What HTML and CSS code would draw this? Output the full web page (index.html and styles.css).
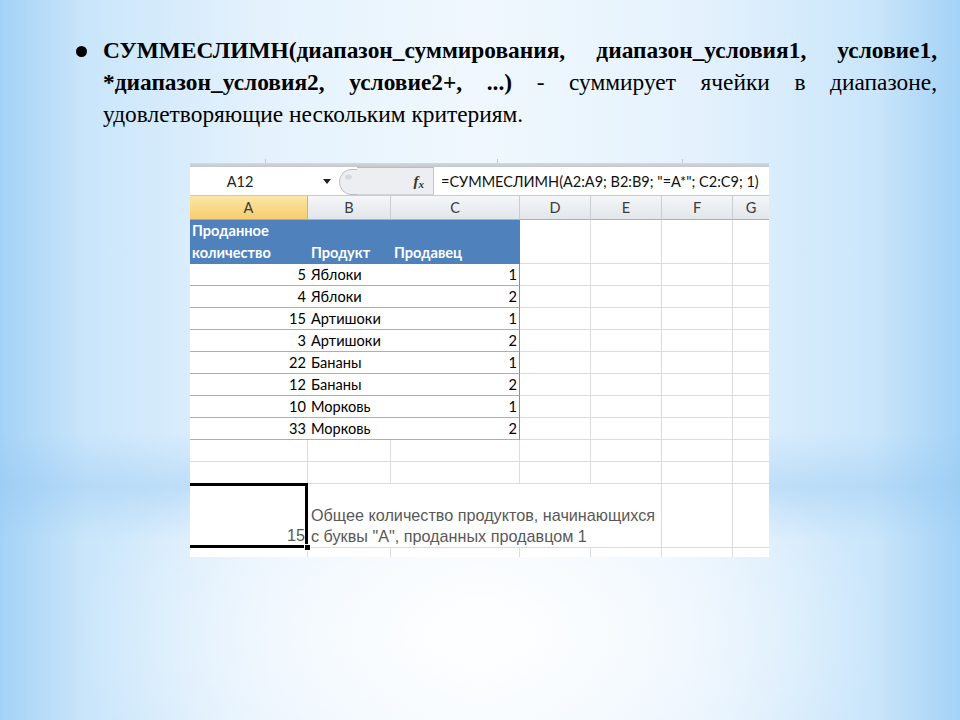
FILE: index.html
```html
<!DOCTYPE html>
<html lang="ru">
<head>
<meta charset="utf-8">
<title>СУММЕСЛИМН</title>
<link rel="stylesheet" href="styles.css">
</head>
<body>
<div class="slide">
  <div class="item">
    <span class="bullet"></span>
    <p class="text"><b>СУММЕСЛИМН(диапазон_суммирования, диапазон_условия1, условие1, *диапазон_условия2, условие2+, ...)</b> - суммирует ячейки в диапазоне, удовлетворяющие нескольким критериям.</p>
  </div>

  <div class="sheet">
    <div class="ribbon-edge">
      <span class="tick t1"></span>
      <span class="tick t2"></span>
      <span class="tick t3"></span>
    </div>
    <div class="trim"></div>
    <div class="fbar">
      <div class="namebox">A12</div>
      <svg class="dd" width="8" height="5" viewBox="0 0 8 5"><path d="M0 0H8L4 5Z" fill="#222"/></svg>
      <svg class="grip" width="18" height="26" viewBox="0 0 18 26">
        <path d="M18 0.5H12A11.5 12.5 0 0 0 12 25.5H18" fill="#eceef1" stroke="#b9bec5"/>
        <ellipse cx="9.5" cy="8" rx="3.5" ry="2.5" fill="#d6d9dd"/>
      </svg>
      <div class="fxarea"><span class="fx">f<span class="fxx">x</span></span></div>
      <div class="formula">=СУММЕСЛИМН(A2:A9; B2:B9; "=A*"; C2:C9; 1)</div>
    </div>

    <div class="grid">
      <div class="ch sel">A</div>
      <div class="ch">B</div>
      <div class="ch">C</div>
      <div class="ch">D</div>
      <div class="ch">E</div>
      <div class="ch">F</div>
      <div class="ch last">G</div>

      <div class="hd hd-a"><span>Проданное</span><span>количество</span></div>
      <div class="hd">Продукт</div>
      <div class="hd hd-c">Продавец</div>
      <div class="c"></div><div class="c"></div><div class="c"></div><div class="c last"></div>

      <div class="d num">5</div><div class="d">Яблоки</div><div class="d num dc">1</div><div class="c"></div><div class="c"></div><div class="c"></div><div class="c last"></div>
      <div class="d num">4</div><div class="d">Яблоки</div><div class="d num dc">2</div><div class="c"></div><div class="c"></div><div class="c"></div><div class="c last"></div>
      <div class="d num">15</div><div class="d">Артишоки</div><div class="d num dc">1</div><div class="c"></div><div class="c"></div><div class="c"></div><div class="c last"></div>
      <div class="d num">3</div><div class="d">Артишоки</div><div class="d num dc">2</div><div class="c"></div><div class="c"></div><div class="c"></div><div class="c last"></div>
      <div class="d num">22</div><div class="d">Бананы</div><div class="d num dc">1</div><div class="c"></div><div class="c"></div><div class="c"></div><div class="c last"></div>
      <div class="d num">12</div><div class="d">Бананы</div><div class="d num dc">2</div><div class="c"></div><div class="c"></div><div class="c"></div><div class="c last"></div>
      <div class="d num">10</div><div class="d">Морковь</div><div class="d num dc">1</div><div class="c"></div><div class="c"></div><div class="c"></div><div class="c last"></div>
      <div class="d num">33</div><div class="d">Морковь</div><div class="d num dc">2</div><div class="c"></div><div class="c"></div><div class="c"></div><div class="c last"></div>

      <div class="c"></div><div class="c"></div><div class="c"></div><div class="c"></div><div class="c"></div><div class="c"></div><div class="c last"></div>
      <div class="c"></div><div class="c"></div><div class="c"></div><div class="c"></div><div class="c"></div><div class="c"></div><div class="c last"></div>

      <div class="c active">15</div>
      <div class="c note">Общее количество продуктов, начинающихся<br>с буквы "А", проданных продавцом 1</div>
      <div class="c"></div><div class="c last"></div>

      <div class="c edge"></div><div class="c edge"></div><div class="c edge"></div><div class="c edge"></div><div class="c edge"></div><div class="c edge"></div><div class="c edge last"></div>
    </div>
  </div>
</div>
</body>
</html>
```

FILE: styles.css
```css
html, body {
  margin: 0;
  padding: 0;
}

body {
  width: 960px;
  height: 720px;
  overflow: hidden;
}

.slide {
  width: 960px;
  height: 720px;
  box-sizing: border-box;
  padding-top: 34px;
  background:
    radial-gradient(ellipse 42% 30% at 50% 88%, rgba(255,255,255,0.95), rgba(255,255,255,0) 100%),
    linear-gradient(to bottom, rgba(150,200,242,0) 60%, rgba(150,200,242,0.4) 67.5%, rgba(150,200,242,0) 75%),
    linear-gradient(to right, #a4d2f6 0%, #cae6fb 9%, #e5f2fd 28%, #f0f8fe 50%, #e5f2fd 72%, #cae6fb 91%, #a4d2f6 100%);
}

/* ---------- bullet text ---------- */
.item {
  display: flex;
  align-items: flex-start;
  padding-left: 76px;
  padding-right: 23px;
}

.bullet {
  flex: none;
  width: 11px;
  height: 11px;
  margin-top: 12px;
  margin-right: 16px;
  border-radius: 50%;
  background: #000;
}

.text {
  margin: 0;
  flex: 1;
  font-family: "Liberation Serif", "Times New Roman", serif;
  font-size: 23.4px;
  line-height: 32px;
  text-align: justify;
  color: #000;
}

.text b {
  font-weight: bold;
}

/* ---------- spreadsheet picture ---------- */
.sheet {
  width: 579px;
  margin-left: 190px;
  margin-top: 25px;
  font-family: Lato, "Open Sans", sans-serif;
}

.ribbon-edge {
  height: 8px;
  display: flex;
  align-items: flex-end;
}

.tick {
  width: 1px;
  height: 4px;
  background: #c4c9cf;
}
.t1 { margin-left: 75px; }
.t2 { margin-left: 231px; }
.t3 { margin-left: 184px; }

.trim {
  height: 4px;
  background: linear-gradient(#d4d8dd, #c3c8ce);
}

.fbar {
  height: 28px;
  display: flex;
  align-items: center;
  background: #fff;
  border-bottom: 1px solid #c6cbd1;
}

.namebox {
  width: 100px;
  text-align: center;
  font-size: 14.5px;
  color: #222;
}

.dd {
  margin-left: 33px;
  margin-top: 1px;
}

.grip {
  margin-left: 8px;
  align-self: flex-end;
  flex: none;
}

.fxarea {
  align-self: stretch;
  width: 77px;
  background: #eceef1;
  border-top: 1px solid #b9bec5;
  border-bottom: 1px solid #d3d7dc;
  border-right: 1px solid #c2c7cd;
  box-sizing: border-box;
  display: flex;
  align-items: center;
  justify-content: flex-end;
  padding-right: 9px;
}

.fx {
  font-family: "Liberation Serif", serif;
  font-style: italic;
  font-weight: bold;
  font-size: 15px;
  color: #333;
}
.fxx {
  font-size: 11px;
  position: relative;
  top: 2px;
}

.formula {
  flex: 1;
  padding-left: 7px;
  font-size: 14.5px;
  color: #111;
  white-space: nowrap;
  overflow: hidden;
}

/* ---------- grid ---------- */
.grid {
  display: grid;
  grid-template-columns: 118px 83px 129px 71px 71px 71px 36px;
  grid-template-rows: 24px 44px repeat(8, 22px) 22px 22px 64px 9px;
  background: #fff;
  font-size: 14.6px;
  color: #000;
}

.grid > div {
  box-sizing: border-box;
  border-right: 1px solid #dadcdf;
  border-bottom: 1px solid #dadcdf;
  white-space: nowrap;
  overflow: hidden;
}

.grid > .last {
  border-right: none;
}

.ch {
  display: flex;
  align-items: center;
  justify-content: center;
  font-size: 14.5px;
  color: #3b3b3b;
  background: linear-gradient(#f4f6f8, #e2e6ea);
  border-right-color: #c9ced4 !important;
  border-bottom-color: #a9b0b8 !important;
}

.ch.sel {
  background: linear-gradient(#fbe6a6, #f7cd6e);
  border-bottom-color: #e0a23a !important;
  border-right-color: #d7b46a !important;
}

.grid > .hd {
  background: #4f81bd;
  color: #fff;
  font-weight: bold;
  border-right: none;
  border-bottom: none;
  display: flex;
  align-items: flex-end;
  padding: 0 0 0 3px;
  line-height: 22px;
}

.grid > .hd-a {
  flex-direction: column;
  align-items: flex-start;
  justify-content: flex-end;
  padding-left: 2px;
}

.grid > .hd-c {
  border-right: 1px solid #4f81bd;
}

.grid > .d {
  border-right: none;
  border-bottom: 1px solid #95b3d7;
  line-height: 21px;
  padding: 0 3px;
}

.grid > .num {
  text-align: right;
  padding-right: 2px;
}

.grid > .dc {
  border-right: 1px solid #6f94c7;
}

.grid > .note {
  grid-column: 2 / 6;
  border-right: 1px solid #dadcdf;
  display: flex;
  align-items: flex-end;
  padding: 0 0 0 3px;
  font-family: "Liberation Sans", Arial, sans-serif;
  font-size: 16.2px;
  line-height: 21px;
  color: #595959;
  white-space: nowrap;
}

.grid > .active {
  position: relative;
  overflow: visible;
  border-top: 3px solid #000;
  border-right: 3px solid #000;
  border-bottom: 3px solid #000;
  margin-top: -1px;
  display: flex;
  align-items: flex-end;
  justify-content: flex-end;
  padding-right: 0;
  font-family: "Liberation Sans", Arial, sans-serif;
  font-size: 16.2px;
  line-height: 19px;
  color: #595959;
}

.grid > .active::after {
  content: "";
  position: absolute;
  right: -6px;
  bottom: -6px;
  width: 5px;
  height: 5px;
  background: #000;
  border: 1px solid #fff;
}

.grid > .edge {
  border-bottom: none;
}
```
